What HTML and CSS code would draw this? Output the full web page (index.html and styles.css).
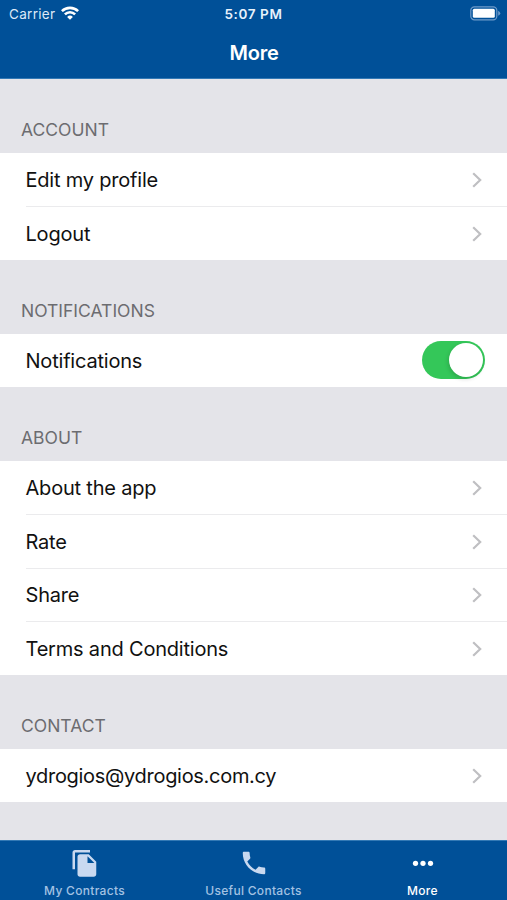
FILE: index.html
```html
<!DOCTYPE html>
<html lang="en">
<head>
<meta charset="utf-8">
<title>More</title>
<link rel="stylesheet" href="styles.css">
</head>
<body>
<div class="app">
  <header class="header">
    <div class="status">
      <div class="carrier"><span>Carrier</span>
        <svg class="wifi" viewBox="0 0 18 14" width="18" height="14"><g fill="none" stroke="#fff" stroke-width="2.6"><path d="M.9 5.2a11.5 11.5 0 0 1 16.2 0"/><path d="M3.9 8.4a7.2 7.2 0 0 1 10.2 0"/></g><path fill="#fff" d="M6.1 10.9a4.1 4.1 0 0 1 5.8 0L9 13.8z"/></svg>
      </div>
      <time class="time">5:07 PM</time>
      <svg class="battery" viewBox="0 0 31 15" width="31" height="15"><rect x=".8" y=".8" width="26" height="13" rx="3.6" fill="none" stroke="#6f9bc9" stroke-width="1.2"/><rect x="2.8" y="2.8" width="22" height="9" rx="1.5" fill="#fff"/><path fill="#6f9bc9" d="M28.2 4.8q2 1 2 2.5t-2 2.5z"/></svg>
    </div>
    <h1 class="title">More</h1>
  </header>
  <main class="content">
    <section class="section">
      <h2 class="heading">ACCOUNT</h2>
      <div class="row"><span>Edit my profile</span><svg class="chevron" viewBox="0 0 10 16"><path d="M1.2 1.2 8.2 8l-7 6.8"/></svg></div>
      <div class="row tall"><span>Logout</span><svg class="chevron" viewBox="0 0 10 16"><path d="M1.2 1.2 8.2 8l-7 6.8"/></svg></div>
    </section>
    <section class="section">
      <h2 class="heading">NOTIFICATIONS</h2>
      <div class="row"><span>Notifications</span><div class="switch"><div class="knob"></div></div></div>
    </section>
    <section class="section">
      <h2 class="heading">ABOUT</h2>
      <div class="row"><span class="wide">About the app</span><svg class="chevron" viewBox="0 0 10 16"><path d="M1.2 1.2 8.2 8l-7 6.8"/></svg></div>
      <div class="row tall"><span>Rate</span><svg class="chevron" viewBox="0 0 10 16"><path d="M1.2 1.2 8.2 8l-7 6.8"/></svg></div>
      <div class="row"><span>Share</span><svg class="chevron" viewBox="0 0 10 16"><path d="M1.2 1.2 8.2 8l-7 6.8"/></svg></div>
      <div class="row tall"><span>Terms and Conditions</span><svg class="chevron" viewBox="0 0 10 16"><path d="M1.2 1.2 8.2 8l-7 6.8"/></svg></div>
    </section>
    <section class="section">
      <h2 class="heading">CONTACT</h2>
      <div class="row"><span class="email">ydrogios@ydrogios.com.cy</span><svg class="chevron" viewBox="0 0 10 16"><path d="M1.2 1.2 8.2 8l-7 6.8"/></svg></div>
    </section>
  </main>
  <nav class="tabs">
    <div class="tab"><svg width="30" height="30" viewBox="0 0 24 24"><path fill="currentColor" d="M16 1.500H4c-1.1 0-2 .9-2 2v13.500h2V3.500h12V1.500zm-1 3.500 6 6v10c0 1.100-.9 2-2 2H7.990C6.890 23 6 22.100 6 21l.01-14c0-1.100.89-2 1.990-2h7zm-1 7h5.500L14 6.500V12z"/></svg><span>My Contracts</span></div>
    <div class="tab"><svg width="30" height="30" viewBox="0 0 24 24"><path fill="currentColor" d="M6.620 10.790c1.440 2.830 3.760 5.140 6.590 6.590l2.200-2.200c.27-.27.670-.36 1.020-.24 1.120.37 2.330.57 3.570.57.550 0 1 .45 1 1V20c0 .55-.45 1-1 1-9.390 0-17-7.610-17-17 0-.55.450-1 1-1h3.500c.55 0 1 .45 1 1 0 1.250.2 2.450.57 3.570.11.350.03.740-.25 1.020l-2.200 2.200z"/></svg><span>Useful Contacts</span></div>
    <div class="tab active"><svg width="30" height="30" viewBox="0 0 24 24"><g fill="currentColor"><circle cx="6" cy="12.200" r="2.100"/><circle cx="12" cy="12.200" r="2.100"/><circle cx="18" cy="12.200" r="2.100"/></g></svg><span>More</span></div>
  </nav>
</div>
</body>
</html>
```
FILE: styles.css
```css
* { box-sizing: border-box; }
body { margin: 0; font-family: Inter, "Liberation Sans", sans-serif; }
.app { display: flex; flex-direction: column; height: 900px; background: #e4e4e9; overflow: hidden; }
.header { height: 79px; background: #005098; color: #fff; border-bottom: 1px solid #3379b5; }
.status { display: grid; grid-template-columns: 1fr auto 1fr; align-items: center; height: 27px; padding: 0 6px; }
.carrier { display: flex; align-items: center; gap: 6px; padding-left: 3px; font-size: 13.5px; color: #dce9f7; letter-spacing: 0.3px; }
.wifi { display: block; margin-top: -2px; }
.time { font-size: 13.5px; font-weight: 600; letter-spacing: 0.6px; color: #e8f2fc; }
.battery { justify-self: end; display: block; }
.title { margin: 0; padding-left: 1px; font-size: 20px; line-height: 52px; font-weight: 600; letter-spacing: -0.2px; text-align: center; }
.content { flex: 1; }
.heading { margin: 0; height: 74px; padding: 41px 21px 0; font-size: 17.5px; line-height: 20px; font-weight: 400; color: #6c6c70; letter-spacing: 0; }
.row { display: flex; align-items: center; justify-content: space-between; height: 53px; padding: 0 22px 0 25.5px; background: #fff; color: #111; font-size: 20px; letter-spacing: -0.2px; }
.row.tall { height: 54px; padding-top: 1px; }
.row + .row { background: linear-gradient(#ebebed, #ebebed) 26px 0 / 100% 1px no-repeat #fff; }
.email { letter-spacing: -0.3px; }
.chevron { width: 10px; height: 16px; margin-right: 3px; fill: none; stroke: #bfbfc2; stroke-width: 2.2; }
.switch { width: 63px; height: 38px; margin-top: -2px; padding: 2px; border-radius: 19px; background: #34c759; display: flex; justify-content: flex-end; }
.knob { width: 34px; height: 34px; border-radius: 50%; background: #fff; box-shadow: -1px 2px 4px rgba(0,0,0,.15); }
.tabs { display: grid; grid-template-columns: repeat(3, 1fr); height: 60px; background: #005098; border-top: 1px solid #3379b5; color: #c9d9f0; }
.tab { display: flex; flex-direction: column; align-items: center; padding-top: 7px; font-size: 12px; font-weight: 500; line-height: 16px; letter-spacing: 0.3px; }
.tab svg { display: block; margin-bottom: 5px; }
.tab span { color: #a3c2e3; }
.tab.active, .tab.active span { color: #fff; }
```
